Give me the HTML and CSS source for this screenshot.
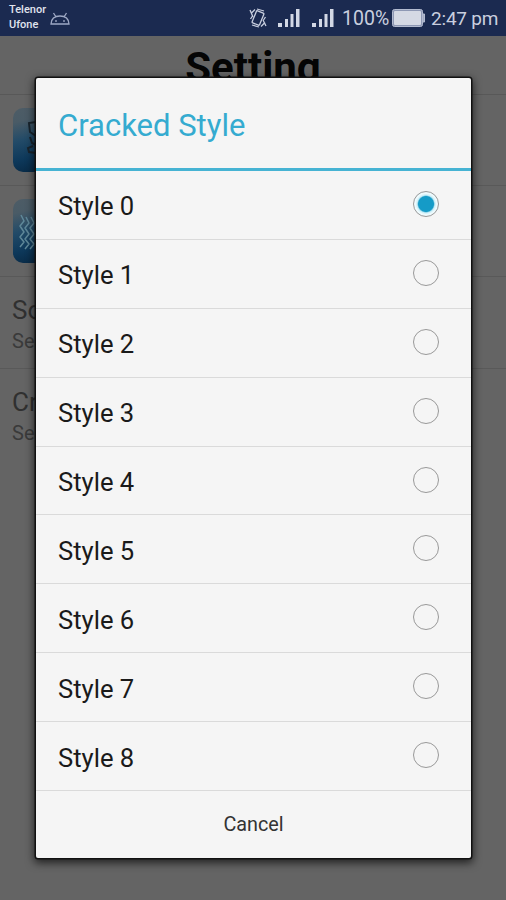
FILE: index.html
```html
<!DOCTYPE html>
<html lang="en">
<head>
<meta charset="utf-8">
<title>Setting</title>
<link rel="stylesheet" href="styles.css">
</head>
<body>
<header class="status">
  <div class="carriers"><span>Telenor</span><span>Ufone</span></div>
  <svg class="droid" width="20" height="14" viewBox="0 0 20 14"><path d="M1 12c.3-5 3.500-8 9-8s8.700 3 9 8zM3.500 1l2.500 4M16.500 1L14 5M6 8v2M14 8v2"/></svg>
  <div class="indicators">
    <svg class="mute" width="18" height="20" viewBox="0 0 18 20"><rect x="5" y="3.500" width="8" height="13" rx="1" transform="rotate(22 9 10)"/><path d="M6 1.500L2 5.500M3.500 8L1.500 11M1 2l3 7M12 18.500l4-4M14.500 12l2-3M17 18l-3-6M8 1l7 2M3 17l7 2"/></svg>
    <svg class="signal" width="22" height="18" viewBox="0 0 22 18"><path d="M0 14h4v4H0zM7 10h3v8H7zM12.500 5h3v13h-3zM18 0h3.500v18H18z"/></svg>
    <svg class="signal second" width="22" height="18" viewBox="0 0 22 18"><path d="M0 14h4v4H0zM7 10h3v8H7zM12.500 5h3v13h-3zM18 0h3.500v18H18z"/></svg>
    <span class="percent">100%</span>
    <svg class="battery" width="33" height="18" viewBox="0 0 33 18"><rect class="shell" x=".5" y=".5" width="30" height="17" rx="2"/><rect class="charge" x="2" y="2" width="27" height="14" rx="1"/><path class="shell" d="M31 5h1.500v8H31z"/></svg>
    <span class="clock">2:47 pm</span>
  </div>
</header>
<main class="settings">
  <h1>Setting</h1>
  <div class="pref">
    <svg class="tile" width="64" height="64" viewBox="0 0 64 64">
      <defs><linearGradient id="blue" x2=".25" y2="1"><stop offset="0" stop-color="#4d5c66"/><stop offset=".22" stop-color="#4a5b66"/><stop offset=".5" stop-color="#234b68"/><stop offset=".8" stop-color="#0d385a"/><stop offset="1" stop-color="#092b47"/></linearGradient></defs>
      <rect width="64" height="64" rx="10" fill="url(#blue)"/>
      <path class="crack" d="M23 14l-7 1 1 9 6 4M17 29l2 6 4 2M20 38l-5 2 1 4 7 1"/>
    </svg>
  </div>
  <div class="pref">
    <svg class="tile" width="64" height="64" viewBox="0 0 64 64">
      <rect width="64" height="64" rx="10" fill="url(#blue)"/>
      <path class="waves" d="M8 16l3 6-4 5 4 6-4 5 4 5-4 5M13 18l3 6-4 5 4 6-4 5 4 5-4 5M18 18l3 6-4 5 4 6-4 5 4 5-4 5"/>
    </svg>
  </div>
  <div class="pref text"><strong>So</strong><span>Se</span></div>
  <div class="pref text"><strong>Cr</strong><span>Se</span></div>
</main>
<section class="dialog">
  <h2>Cracked Style</h2>
  <label class="option"><span>Style 0</span><i class="radio on"></i></label>
  <label class="option"><span>Style 1</span><i class="radio"></i></label>
  <label class="option"><span>Style 2</span><i class="radio"></i></label>
  <label class="option"><span>Style 3</span><i class="radio"></i></label>
  <label class="option"><span>Style 4</span><i class="radio"></i></label>
  <label class="option"><span>Style 5</span><i class="radio"></i></label>
  <label class="option"><span>Style 6</span><i class="radio"></i></label>
  <label class="option"><span>Style 7</span><i class="radio"></i></label>
  <label class="option"><span>Style 8</span><i class="radio"></i></label>
  <button class="cancel">Cancel</button>
</section>
</body>
</html>
```
FILE: styles.css
```css
* { box-sizing: border-box; }
body {
  margin: 0;
  height: 900px;
  overflow: hidden;
  position: relative;
  background: #646464;
  font-family: Roboto, sans-serif;
}
.status {
  display: flex;
  align-items: center;
  height: 36px;
  padding: 0 8px 0 9px;
  background: #1b2a50;
  color: #c9cfdf;
}
.carriers {
  display: flex;
  flex-direction: column;
  width: 41px;
  font: 500 11px/15px Roboto, sans-serif;
  color: #e0e4ee;
  padding-bottom: 2px;
}
.droid { margin-top: 2px; fill: none; stroke: #9fa9c5; stroke-width: 1.3; }
.indicators { display: flex; align-items: center; margin-left: auto; }
.mute { fill: none; stroke: #c9cfdf; stroke-width: 1.3; margin-right: 11px; }
.signal { fill: #d3d8e5; margin-right: 12px; }
.second { margin-right: 8px; }
.percent, .clock { font-size: 20px; line-height: 24px; white-space: nowrap; padding-top: 2px; }
.percent { width: 48px; font-size: 19.5px; }
.battery { margin-right: 6px; margin-left: 2px; }
.shell { fill: #8e98b4; stroke: #b3bbd0; }
.charge { fill: #d5d9e4; }
.clock { width: 67px; font-size: 19px; letter-spacing: -0.2px; }
.settings h1 {
  margin: 0;
  height: 59px;
  padding-top: 7px;
  border-bottom: 1px solid #585858;
  font: 700 42px/49px Roboto, sans-serif;
  text-align: center;
  color: #050505;
}
.pref {
  height: 91px;
  padding: 13px 0 0 13px;
  border-bottom: 1px solid #595959;
}
.tile { display: block; }
.crack { fill: none; stroke: #18242d; stroke-width: 2; }
.waves { fill: none; stroke: #5f8899; stroke-width: 1.5; stroke-linejoin: round; }
.pref.text {
  display: flex;
  flex-direction: column;
  height: 92px;
  padding: 17px 0 0 12px;
  color: #303030;
}
.pref.text:last-child { border: 0; }
.pref strong { font-size: 26px; line-height: 32px; font-weight: 400; }
.pref span { font-size: 20px; line-height: 30px; color: #3a3a3a; }
.dialog {
  position: absolute;
  left: 36px;
  top: 78px;
  width: 435px;
  height: 780px;
  background: #f5f5f5;
  border-radius: 2px;
  box-shadow: 0 0 0 1.5px #111, 0 3px 9px 2px rgba(0,0,0,.65);
}
.dialog h2 {
  margin: 0;
  height: 93px;
  padding: 2px 22px 0;
  border-bottom: 3px solid #46b3d3;
  font-size: 31px;
  line-height: 92px;
  font-weight: 400;
  color: #35abd0;
}
.option {
  display: flex;
  align-items: center;
  justify-content: space-between;
  height: 68.9px;
  padding: 0 32px 0 22px;
  border-bottom: 1px solid #dadada;
  font-size: 25.6px;
  color: #1a1a1a;
}
.option span { padding-top: 3px; }
.radio {
  width: 26px;
  height: 26px;
  margin-bottom: 2px;
  border: 1.5px solid #999;
  border-radius: 50%;
}
.radio.on {
  background: radial-gradient(circle, #159bc7 0 7.5px, #c8edf7 8.8px, #eefafd 10.5px);
}
.cancel {
  display: block;
  width: 100%;
  height: 66px;
  padding: 2px 0 0;
  border: 0;
  background: none;
  font: 400 19.8px/24px Roboto, sans-serif;
  color: #333;
}
```
